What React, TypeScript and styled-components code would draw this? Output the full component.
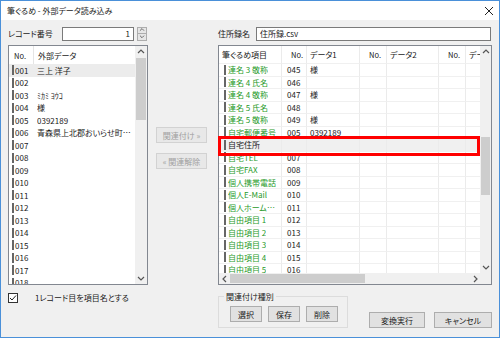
import React from 'react';
import styled, {createGlobalStyle} from 'styled-components';

const GlobalStyle = createGlobalStyle`
  * { box-sizing: border-box; }
  body {
    margin: 0;
    font-family: "Noto Sans CJK JP", "Liberation Sans", sans-serif;
    font-size: 8px;
    font-feature-settings: "palt";
    color: #1a1a1a;
  }
`;

type Entry = { no: string; data?: string; selected?: boolean };

const records: Entry[] = [
    {no: '001', data: '三上 洋子', selected: true},
    {no: '002'},
    {no: '003', data: 'ﾐｶﾐ ﾖｳｺ'},
    {no: '004', data: '様'},
    {no: '005', data: '0392189'},
    {no: '006', data: '青森県上北郡おいらせ町下明堂'},
    {no: '007'}, {no: '008'}, {no: '009'}, {no: '010'}, {no: '011'}, {no: '012'},
    {no: '013'}, {no: '014'}, {no: '015'}, {no: '016'}, {no: '017'}, {no: '018'},
];

type Field = { name: string; no?: string; d1?: string; selected?: boolean };

const fields: Field[] = [
    {name: '連名 3 敬称', no: '045', d1: '様'},
    {name: '連名 4 氏名', no: '046'},
    {name: '連名 4 敬称', no: '047', d1: '様'},
    {name: '連名 5 氏名', no: '048'},
    {name: '連名 5 敬称', no: '049', d1: '様'},
    {name: '自宅郵便番号', no: '005', d1: '0392189'},
    {name: '自宅住所', selected: true},
    {name: '自宅TEL', no: '007'},
    {name: '自宅FAX', no: '008'},
    {name: '個人携帯電話', no: '009'},
    {name: '個人E-Mail', no: '010'},
    {name: '個人ホームページ', no: '011'},
    {name: '自由項目 1', no: '012'},
    {name: '自由項目 2', no: '013'},
    {name: '自由項目 3', no: '014'},
    {name: '自由項目 4', no: '015'},
    {name: '自由項目 5', no: '016'},
];

const cols = [63, 25, 53, 27, 52, 27, 40];
const heads = ['筆ぐるめ項目', 'No.', 'データ1', 'No.', 'データ2', 'No.', 'データ3'];

const Chevron: React.FC<{ dir: 'up' | 'down' | 'left' | 'right' }> = ({dir}) => {
    const pts = {
        up: '1,5 4,2 7,5',
        down: '1,2 4,5 7,2',
        left: '5,1 2,4 5,7',
        right: '3,1 6,4 3,7',
    }[dir];
    return <svg width="8" height="8" viewBox="0 0 8 8">
        <polyline points={pts} fill="none" stroke="#555" strokeWidth="1.2"/>
    </svg>;
};

const VScrollBar: React.FC<{ offset: number; size: number; width: number }> = ({offset, size, width}) =>
    <VScroll $w={width}>
        <Arrow><Chevron dir="up"/></Arrow>
        <Track><Thumb style={{marginTop: offset, height: size}}/></Track>
        <Arrow><Chevron dir="down"/></Arrow>
    </VScroll>;

export default function App() {
    return <>
        <GlobalStyle/>
        <Window>
            <TitleBar>
                <span>筆ぐるめ - 外部データ読み込み</span>
                <svg width="10" height="10" viewBox="0 0 10 10">
                    <path d="M1 1 L9 9 M9 1 L1 9" stroke="#222" strokeWidth="1"/>
                </svg>
            </TitleBar>
            <Body>
                <FieldRow>
                    <Label $w={54}>レコード番号</Label>
                    <TextBox $w={72} $right>1</TextBox>
                    <Spinner>
                        <SpinBtn><Chevron dir="up"/></SpinBtn>
                        <SpinBtn><Chevron dir="down"/></SpinBtn>
                    </Spinner>
                </FieldRow>
                <div/>
                <FieldRow>
                    <Label $w={38}>住所録名</Label>
                    <TextBox>住所録.csv</TextBox>
                </FieldRow>

                <List>
                    <ListMain>
                        <ListHeader>
                            <HeadCell $w={25} $pad={5} $line $small>No.</HeadCell>
                            <HeadCell $w={90} $pad={4}>外部データ</HeadCell>
                        </ListHeader>
                        {records.map(r =>
                            <ListRow key={r.no} $selected={r.selected}>
                                <Marker/>
                                <RecNo>{r.no}</RecNo>
                                <RecData>{r.data}</RecData>
                            </ListRow>)}
                    </ListMain>
                    <VScrollBar offset={1} size={62} width={12}/>
                </List>

                <Middle>
                    <Button $w={51} $disabled>関連付け »</Button>
                    <Button $w={51} $disabled>« 関連解除</Button>
                </Middle>

                <DataGrid>
                    <TableArea>
                        <TableRow $head>
                            {heads.map((h, i) =>
                                <Cell key={i} $w={cols[i]} $pad={h === 'No.' ? 9 : 3} $small={h === 'No.'}>{h}</Cell>)}
                        </TableRow>
                        {fields.map(f =>
                            <TableRow key={f.name} $selected={f.selected}>
                                <Cell $w={cols[0]} $pad={2}>
                                    <Marker/>
                                    <FieldName $selected={f.selected}>{f.name}</FieldName>
                                </Cell>
                                <Cell $w={cols[1]} $pad={5}>{f.no}</Cell>
                                <Cell $w={cols[2]} $pad={3}>{f.d1}</Cell>
                                <Cell $w={cols[3]}/>
                                <Cell $w={cols[4]}/>
                                <Cell $w={cols[5]}/>
                                <Cell $w={cols[6]}/>
                            </TableRow>)}
                    </TableArea>
                    <VScrollBar offset={80} size={58} width={11}/>
                    <HScroll>
                        <Arrow $h><Chevron dir="left"/></Arrow>
                        <HTrack><HThumb style={{width: 135}}/></HTrack>
                        <Arrow $h><Chevron dir="right"/></Arrow>
                    </HScroll>
                    <Corner/>
                    <Highlight/>
                </DataGrid>

                <CheckRow>
                    <CheckBox>
                        <svg width="8" height="8" viewBox="0 0 8 8">
                            <polyline points="1,4 3,6 7,1.5" fill="none" stroke="#222" strokeWidth="1"/>
                        </svg>
                    </CheckBox>
                    <CheckLabel>1レコード目を項目名とする</CheckLabel>
                </CheckRow>
                <div/>
                <Footer>
                    <Group>
                        <Legend>関連付け種別</Legend>
                        <GroupButtons>
                            <Button $w={32}>選択</Button>
                            <Button $w={32}>保存</Button>
                            <Button $w={32}>削除</Button>
                        </GroupButtons>
                    </Group>
                    <FooterButtons>
                        <Button $w={56}>変換実行</Button>
                        <Button $w={58}>キャンセル</Button>
                    </FooterButtons>
                </Footer>
            </Body>
        </Window>
    </>;
}

const Window = styled.div`
    width: 500px;
    height: 338px;
    border: 1px solid #4a90d9;
    background: #f0f0f0;
    display: flex;
    flex-direction: column;
`

const TitleBar = styled.div`
    height: 19px;
    background: #fff;
    display: flex;
    align-items: center;
    justify-content: space-between;
    padding: 0 5px 0 6px;
`

const Body = styled.div`
    flex: 1;
    display: grid;
    grid-template-columns: 140px 70px 1fr;
    grid-template-rows: 13px 240px 1fr;
    row-gap: 5px;
    padding: 7px 7px 0 7px;
`

const FieldRow = styled.div`
    display: flex;
    align-items: center;
`

const Label = styled.span<{ $w: number }>`
    width: ${p => p.$w}px;
    flex-shrink: 0;
`

const TextBox = styled.div<{ $w?: number; $right?: boolean }>`
    ${p => p.$w ? `width: ${p.$w}px;` : 'flex: 1;'}
    height: 14px;
    background: #fff;
    border: 1px solid #7a7a7a;
    padding: 0 3px;
    line-height: 12px;
    text-align: ${p => p.$right ? 'right' : 'left'};
    margin-right: 1px;
`

const Spinner = styled.div`
    width: 10px;
    height: 14px;
    margin-left: 2px;
    display: flex;
    flex-direction: column;
`

const SpinBtn = styled.div`
    flex: 1;
    background: #e6e6e6;
    border: 1px solid #adadad;
    display: flex;
    align-items: center;
    justify-content: center;
    overflow: hidden;

    & + & { border-top: none; }

    svg { transform: scale(0.7); }
`

const List = styled.div`
    border: 1px solid #828790;
    background: #fff;
    display: flex;
    overflow: hidden;
`

const ListMain = styled.div`
    flex: 1;
    min-width: 0;
    overflow: hidden;
`

const ListHeader = styled.div`
    height: 18px;
    display: flex;
`

const HeadCell = styled.div<{ $w: number; $pad: number; $line?: boolean; $small?: boolean }>`
    width: ${p => p.$w}px;
    flex-shrink: 0;
    display: flex;
    align-items: center;
    padding-left: ${p => p.$pad}px;
    border-right: ${p => p.$line ? '1px solid #e5e5e5' : 'none'};
    font-size: ${p => p.$small ? '7.5px' : 'inherit'};
`

const ListRow = styled.div<{ $selected?: boolean }>`
    height: 12.5px;
    display: flex;
    align-items: center;
    background: ${p => p.$selected ? '#ececec' : 'transparent'};
`

const Marker = styled.span`
    width: 2px;
    height: 10px;
    background: #666;
    margin-left: 3px;
    flex-shrink: 0;
`

const RecNo = styled.span`
    width: 23px;
    padding-left: 1px;
    flex-shrink: 0;
`

const RecData = styled.span`
    flex: 1;
    min-width: 0;
    white-space: nowrap;
    overflow: hidden;
    text-overflow: ellipsis;
    padding-right: 4px;
`

const VScroll = styled.div<{ $w: number }>`
    width: ${p => p.$w}px;
    flex-shrink: 0;
    background: #f0f0f0;
    display: flex;
    flex-direction: column;
`

const Arrow = styled.div<{ $h?: boolean }>`
    ${p => p.$h ? 'width: 11px;' : 'height: 11px;'}
    flex-shrink: 0;
    display: flex;
    align-items: center;
    justify-content: center;
`

const Track = styled.div`
    flex: 1;
    padding: 0 1px;
`

const Thumb = styled.div`
    background: #cdcdcd;
`

const Middle = styled.div`
    display: flex;
    flex-direction: column;
    gap: 10px;
    padding: 82px 0 0 8px;
`

const Button = styled.button<{ $w: number; $disabled?: boolean }>`
    width: ${p => p.$w}px;
    height: 16px;
    padding: 0;
    flex-shrink: 0;
    font: inherit;
    font-feature-settings: "palt";
    background: ${p => p.$disabled ? '#e8e8e8' : '#e1e1e1'};
    border: 1px solid ${p => p.$disabled ? '#d2d2d2' : '#adadad'};
    color: ${p => p.$disabled ? '#a0a0a0' : '#1a1a1a'};
`

const DataGrid = styled.div`
    position: relative;
    border: 1px solid #828790;
    background: #fff;
    display: grid;
    grid-template-columns: 1fr 11px;
    grid-template-rows: 1fr 11px;
    min-width: 0;
`

const TableArea = styled.div`
    overflow: hidden;
    min-width: 0;
`

const TableRow = styled.div<{ $head?: boolean; $selected?: boolean }>`
    display: flex;
    height: ${p => p.$head ? '18px' : '12.5px'};
    background: ${p => p.$selected ? '#f0f0f0' : 'transparent'};
`

const Cell = styled.div<{ $w: number; $pad?: number; $small?: boolean }>`
    width: ${p => p.$w}px;
    flex-shrink: 0;
    display: flex;
    align-items: center;
    padding-left: ${p => p.$pad ?? 0}px;
    border-right: 1px solid #ebebeb;
    border-bottom: 1px solid #f0f0f0;
    overflow: hidden;
    white-space: nowrap;
    font-size: ${p => p.$small ? '7.5px' : 'inherit'};
`

const FieldName = styled.span<{ $selected?: boolean }>`
    color: ${p => p.$selected ? '#1a1a1a' : '#1f9a2a'};
    margin-left: 2px;
    overflow: hidden;
    text-overflow: ellipsis;
    min-width: 0;
`

const HScroll = styled.div`
    display: flex;
    background: #f0f0f0;
`

const HTrack = styled.div`
    flex: 1;
    padding: 1px 0;
    display: flex;
`

const HThumb = styled.div`
    background: #cdcdcd;
`

const Corner = styled.div`
    background: #f0f0f0;
`

const Highlight = styled.div`
    position: absolute;
    left: -1px;
    top: 90px;
    width: 262px;
    height: 20px;
    border: 3px solid #ff0000;
    pointer-events: none;
`

const CheckRow = styled.div`
    display: flex;
    align-items: flex-start;
    padding-top: 3px;
`

const CheckBox = styled.div`
    width: 10px;
    height: 10px;
    border: 1px solid #333;
    background: #fff;
    display: flex;
    align-items: center;
    justify-content: center;
`

const CheckLabel = styled.span`
    margin-left: 17px;
    line-height: 10px;
`

const Footer = styled.div`
    display: flex;
    align-items: flex-start;
`

const Group = styled.fieldset`
    width: 130px;
    margin: 1px 0 0;
    padding: 0;
    min-width: 0;
    border: 1px solid #dcdcdc;
`

const Legend = styled.legend`
    margin-left: 5px;
    padding: 0 2px;
    line-height: 11px;
`

const GroupButtons = styled.div`
    display: flex;
    gap: 6px;
    padding: 4px 0 5px 11px;
`

const FooterButtons = styled.div`
    display: flex;
    gap: 9px;
    margin: 22px 0 0 21px;
`
